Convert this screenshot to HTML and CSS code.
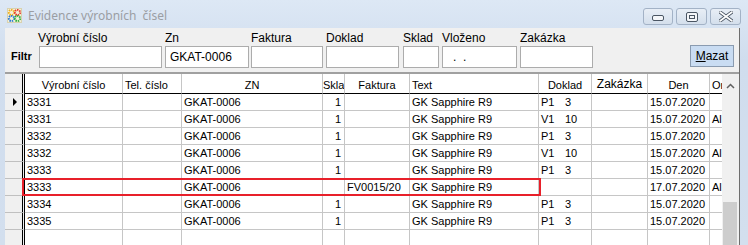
FILE: index.html
```html
<!DOCTYPE html>
<html lang="cs">
<head>
<meta charset="utf-8">
<title>Evidence výrobních čísel</title>
<link rel="stylesheet" href="styles.css">
</head>
<body>
<div class="window">
  <div class="titlebar">
    <svg class="app-icon" width="15" height="15" viewBox="0 0 15 15">
      <rect x="0.5" y="0.5" width="14" height="14" fill="#f4f0d8" stroke="#d8d2b0"/>
      <circle cx="4.5" cy="4.5" r="2.6" fill="none" stroke="#f0b020" stroke-width="2" stroke-dasharray="1.4 0.9"/>
      <circle cx="10.5" cy="4.5" r="2.6" fill="none" stroke="#e83a2a" stroke-width="2" stroke-dasharray="1.4 0.9"/>
      <circle cx="4.5" cy="10.5" r="2.6" fill="none" stroke="#2a7ad8" stroke-width="2" stroke-dasharray="1.4 0.9"/>
      <circle cx="10.5" cy="10.5" r="2.6" fill="none" stroke="#30b040" stroke-width="2" stroke-dasharray="1.4 0.9"/>
    </svg>
    <span class="title">Evidence výrobních&nbsp; čísel</span>
    <div class="winbtns">
      <div class="wbtn w-min">
        <svg width="12" height="6" viewBox="0 0 12 6"><rect x="0.5" y="0.5" width="11" height="5" rx="1.5" fill="#f4f6f9" stroke="#4a5563"/></svg>
      </div>
      <div class="wbtn w-max">
        <svg width="12" height="10" viewBox="0 0 12 10"><rect x="0.5" y="0.5" width="11" height="9" rx="1.5" fill="#f4f6f9" stroke="#4a5563"/><rect x="3.5" y="3.5" width="5" height="3" fill="none" stroke="#4a5563"/></svg>
      </div>
      <div class="wbtn w-close">
        <svg width="14" height="11" viewBox="0 0 14 11"><path d="M1 1 L13 10 M13 1 L1 10" stroke="#4a5563" stroke-width="3.4" stroke-linecap="round"/><path d="M1 1 L13 10 M13 1 L1 10" stroke="#ffffff" stroke-width="1.6" stroke-linecap="round"/></svg>
      </div>
    </div>
  </div>

  <div class="client">
    <div class="filter">
      <div class="flabel f-vc">Výrobní číslo</div>
      <div class="flabel f-zn">Zn</div>
      <div class="flabel f-fa">Faktura</div>
      <div class="flabel f-do">Doklad</div>
      <div class="flabel f-sk">Sklad</div>
      <div class="flabel f-vl">Vloženo</div>
      <div class="flabel f-za">Zakázka</div>

      <div class="filtr">Filtr</div>
      <div class="finput i-vc"></div>
      <div class="finput i-zn">GKAT-0006</div>
      <div class="finput i-fa"></div>
      <div class="finput i-do"></div>
      <div class="finput i-sk"></div>
      <div class="finput i-vl"><span class="dot">.</span><span class="dot">.</span></div>
      <div class="finput i-za"></div>
      <div class="mazat"><u>M</u>azat</div>
    </div>

    <div class="grid">
      <div class="table">
        <div class="c ind hd"></div>
        <div class="c hd ctr">Výrobní číslo</div>
        <div class="c hd">Tel. číslo</div>
        <div class="c hd ctr">ZN</div>
        <div class="c hd tight">Sklad</div>
        <div class="c hd ctr">Faktura</div>
        <div class="c hd">Text</div>
        <div class="c hd ctr">Doklad</div>
        <div class="c hd ctr big">Zakázka</div>
        <div class="c hd ctr">Den</div>
        <div class="c hd last">Or</div>

        <div class="c ind"><span class="cur"></span></div>
        <div class="c">3331</div><div class="c"></div><div class="c">GKAT-0006</div><div class="c r">1</div><div class="c"></div><div class="c">GK Sapphire R9</div><div class="c"><span class="dk">P1</span>3</div><div class="c"></div><div class="c">15.07.2020</div><div class="c last"></div>

        <div class="c ind"></div>
        <div class="c">3331</div><div class="c"></div><div class="c">GKAT-0006</div><div class="c r">1</div><div class="c"></div><div class="c">GK Sapphire R9</div><div class="c"><span class="dk">V1</span>10</div><div class="c"></div><div class="c">15.07.2020</div><div class="c last">Al</div>

        <div class="c ind"></div>
        <div class="c">3332</div><div class="c"></div><div class="c">GKAT-0006</div><div class="c r">1</div><div class="c"></div><div class="c">GK Sapphire R9</div><div class="c"><span class="dk">P1</span>3</div><div class="c"></div><div class="c">15.07.2020</div><div class="c last"></div>

        <div class="c ind"></div>
        <div class="c">3332</div><div class="c"></div><div class="c">GKAT-0006</div><div class="c r">1</div><div class="c"></div><div class="c">GK Sapphire R9</div><div class="c"><span class="dk">V1</span>10</div><div class="c"></div><div class="c">15.07.2020</div><div class="c last">Al</div>

        <div class="c ind"></div>
        <div class="c">3333</div><div class="c"></div><div class="c">GKAT-0006</div><div class="c r">1</div><div class="c"></div><div class="c">GK Sapphire R9</div><div class="c"><span class="dk">P1</span>3</div><div class="c"></div><div class="c">15.07.2020</div><div class="c last"></div>

        <div class="c ind"></div>
        <div class="c">3333</div><div class="c"></div><div class="c">GKAT-0006</div><div class="c r"></div><div class="c">FV0015/20</div><div class="c">GK Sapphire R9</div><div class="c"></div><div class="c"></div><div class="c">17.07.2020</div><div class="c last">Al</div>

        <div class="c ind"></div>
        <div class="c">3334</div><div class="c"></div><div class="c">GKAT-0006</div><div class="c r">1</div><div class="c"></div><div class="c">GK Sapphire R9</div><div class="c"><span class="dk">P1</span>3</div><div class="c"></div><div class="c">15.07.2020</div><div class="c last"></div>

        <div class="c ind"></div>
        <div class="c">3335</div><div class="c"></div><div class="c">GKAT-0006</div><div class="c r">1</div><div class="c"></div><div class="c">GK Sapphire R9</div><div class="c"><span class="dk">P1</span>3</div><div class="c"></div><div class="c">15.07.2020</div><div class="c last"></div>

        <div class="c ind"></div>
        <div class="c"></div><div class="c"></div><div class="c"></div><div class="c"></div><div class="c"></div><div class="c"></div><div class="c"></div><div class="c"></div><div class="c"></div><div class="c last"></div>
      </div>
      <div class="vscroll">
        <svg class="arrow" width="9" height="6" viewBox="0 0 9 6"><path d="M1 5 L4.5 1.5 L8 5" fill="none" stroke="#606060" stroke-width="1.5"/></svg>
        <div class="thumb"></div>
      </div>
      <div class="highlight"></div>
    </div>
  </div>
</div>
</body>
</html>
```

FILE: styles.css
```css
* { box-sizing: border-box; }

html, body {
  margin: 0;
  padding: 0;
}

body {
  width: 748px;
  height: 245px;
  overflow: hidden;
  background: #d3dfee;
  font-family: "Liberation Sans", Arial, sans-serif;
  color: #000;
}

.window {
  width: 748px;
  height: 245px;
  display: flex;
  flex-direction: column;
  background: linear-gradient(to bottom, #dde8f5 0px, #d0ddee 60px, #d3dfee 245px);
}

.titlebar {
  height: 28px;
  display: flex;
  align-items: flex-start;
  padding: 8px 7px 0 7px;
  flex: none;
}

.app-icon {
  flex: none;
  display: block;
}

.title {
  margin-left: 6px;
  margin-top: 0px;
  font-family: "Noto Sans", "Open Sans", sans-serif;
  font-size: 12px;
  line-height: 15px;
  color: #9b9ea3;
  white-space: nowrap;
}

.winbtns {
  margin-left: auto;
  display: flex;
  gap: 3px;
}

.wbtn {
  height: 17px;
  border: 1px solid #a3b2c6;
  border-radius: 3px;
  background: linear-gradient(to bottom, #e8eef6, #d4dfec);
  display: flex;
  align-items: center;
  justify-content: center;
}

.w-min { width: 30px; }
.w-max { width: 31px; }
.w-close { width: 31px; }
.w-min svg { margin-top: 3px; }

.client {
  flex: 1;
  margin-left: 5px;
  width: 735px;
  background: #f0f0f0;
  border-right: 1px solid #6e6e6e;
  display: flex;
  flex-direction: column;
  overflow: hidden;
}

.filter {
  display: grid;
  grid-template-columns: 33px 127px 86px 75px 77px 39px 78px 170px 44px;
  grid-template-rows: 18px 22px;
  height: 42px;
  flex: none;
}

.flabel {
  grid-row: 1;
  font-size: 12px;
  line-height: 14px;
  padding-top: 3px;
  white-space: nowrap;
}

.f-vc { grid-column: 2; }
.f-zn { grid-column: 3; }
.f-fa { grid-column: 4; }
.f-do { grid-column: 5; }
.f-sk { grid-column: 6; }
.f-vl { grid-column: 7; }
.f-za { grid-column: 8; }

.filtr {
  grid-row: 2;
  grid-column: 1;
  font-size: 11px;
  font-weight: bold;
  padding-left: 6px;
  align-self: center;
  margin-top: -3px;
}

.finput {
  grid-row: 2;
  height: 22px;
  background: #fff;
  border: 1px solid #acacac;
  font-size: 12px;
  line-height: 20px;
  padding-left: 4px;
  white-space: nowrap;
}

.i-vc { grid-column: 2; width: 123px; margin-left: 1px; }
.i-zn { grid-column: 3; width: 84px; }
.i-fa { grid-column: 4; width: 72px; }
.i-do { grid-column: 5; width: 73px; }
.i-sk { grid-column: 6; width: 36px; }
.i-vl { grid-column: 7; width: 75px; padding-left: 10px; }
.i-za { grid-column: 8; width: 73px; }

.dot {
  display: inline-block;
  width: 10px;
}

.mazat {
  grid-row: 2;
  grid-column: 9;
  height: 22px;
  margin-top: -1px;
  background: #c9dcf2;
  border: 1px solid #8a9bb0;
  font-size: 12px;
  line-height: 20px;
  text-align: center;
}

.grid {
  margin-top: 2px;
  flex: 1;
  border-top: 2px solid #a0a0a0;
  display: flex;
  position: relative;
  overflow: hidden;
  background: #fff;
}

.table {
  width: 717px;
  flex: none;
  display: grid;
  grid-template-columns: 20px 98px 59px 141px 22px 65px 129px 53px 56px 62px 12px;
  grid-template-rows: 20px;
  grid-auto-rows: 17px;
  align-content: start;
}

.c {
  font-size: 11px;
  line-height: 16px;
  padding: 0 2px;
  border-right: 1px solid #c6c6c6;
  border-bottom: 1px solid #c6c6c6;
  white-space: nowrap;
  overflow: hidden;
}

.c.last { border-right: none; }

.hd {
  border-bottom: 1px solid #000;
  padding-top: 3px;
}

.hd.tight { padding-left: 0; padding-right: 0; }

.hd.big { font-size: 12px; padding-top: 2px; }

.ind {
  background: #f0f0f0;
  border-right: 3px double #000;
  border-bottom: 1px solid #c0c0c0;
  display: flex;
  align-items: center;
  justify-content: center;
  padding: 0 0 0 2px;
}

.ind.hd { border-bottom: 1px solid #c0c0c0; }

.ctr { text-align: center; }
.r { text-align: right; padding-right: 3px; }

.dk {
  display: inline-block;
  width: 24px;
}

.cur {
  width: 0;
  height: 0;
  border-left: 4px solid #000;
  border-top: 4px solid transparent;
  border-bottom: 4px solid transparent;
}

.vscroll {
  width: 17px;
  flex: none;
  background: #f0f0f0;
  position: relative;
}

.arrow {
  position: absolute;
  left: 4px;
  top: 9px;
}

.thumb {
  position: absolute;
  left: 1px;
  top: 128px;
  width: 14px;
  height: 100px;
  background: #cdcdcd;
}

.highlight {
  position: absolute;
  left: 17px;
  top: 104px;
  width: 519px;
  height: 18px;
  border: 2px solid #e8202a;
  pointer-events: none;
}
```
